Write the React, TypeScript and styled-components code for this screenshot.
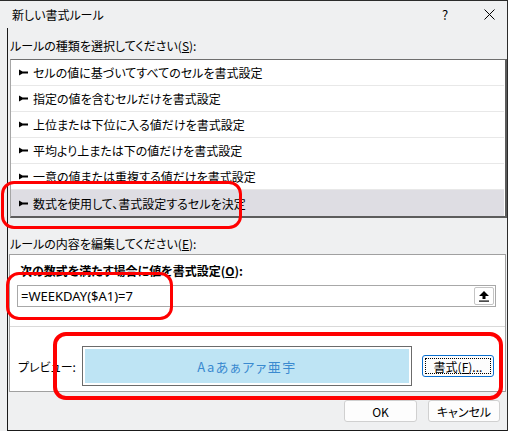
import React from "react";
import styled, { createGlobalStyle } from "styled-components";

const GlobalStyle = createGlobalStyle`
  html, body {
    margin: 0;
    padding: 0;
    background: #ffffff;
    overflow: hidden;
  }
  body {
    font-family: "Noto Sans CJK JP", "Noto Sans", sans-serif;
    font-feature-settings: "palt";
    font-size: 12px;
    color: #000;
  }
`;

const Dialog = styled.div`
  position: relative;
  width: 508px;
  height: 431px;
  box-sizing: border-box;
  border-top: 1px solid #2b2b2b;
  border-right: 1px solid #2b2b2b;
  background: #eff0f1;
  display: flex;
  flex-direction: column;
`;

const TitleBar = styled.div`
  height: 27px;
  display: flex;
  align-items: center;
  padding-left: 12px;
  font-size: 12px;
`;

const Title = styled.div`
  flex: 1;
`;

const TitleButton = styled.div<{ $w: number }>`
  width: ${(p) => p.$w}px;
  height: 27px;
  display: flex;
  align-items: center;
  justify-content: center;
  font-size: 13px;
`;

const Body = styled.div`
  flex: 1;
  margin-left: 7px;
  border-left: 1px solid #1a1a1a;
  border-bottom: 1px solid #1a1a1a;
  display: flex;
  flex-direction: column;
`;

const Label = styled.div<{ $top: number }>`
  margin-top: ${(p) => p.$top}px;
  padding-left: 2px;
  line-height: 16px;
  height: 16px;
`;

const ListBox = styled.div`
  margin: 5px 0 0 2px;
  width: 497px;
  box-sizing: border-box;
  background: #fff;
  border-top: 1px solid #6e6e6e;
  border-left: 1px solid #a6a6a6;
  border-right: 2px solid #5c5c5c;
  border-bottom: 2px solid #5c5c5c;
  padding-right: 1px;
`;

const Row = styled.div<{ $selected?: boolean }>`
  height: 26px;
  box-sizing: border-box;
  display: flex;
  align-items: center;
  gap: 5px;
  padding-left: 8px;
  background: ${(p) => (p.$selected ? "#dedde3" : "#ffffff")};
  border-bottom: ${(p) => (p.$selected ? "none" : "1px solid #e8e8e8")};
`;

const Panel = styled.div`
  margin: 2px 0 0 1px;
  width: 497px;
  box-sizing: border-box;
  background: #fff;
  border: 1px solid #a0a0a0;
  display: flex;
  flex-direction: column;
`;

const Heading = styled.div`
  margin: 8px 0 0 10px;
  line-height: 16px;
  font-weight: bold;
`;

const FormulaInput = styled.div`
  margin: 6px 0 0 7px;
  width: 479px;
  height: 22px;
  box-sizing: border-box;
  border: 1px solid #a8a8a8;
  display: flex;
  align-items: center;
  justify-content: space-between;
  padding: 0 1px 0 3px;
  font-family: "Noto Sans", sans-serif;
  font-size: 13px;
`;

const IconButton = styled.div`
  width: 20px;
  height: 18px;
  box-sizing: border-box;
  border: 1px solid #c4c4c4;
  border-radius: 2px;
  display: flex;
  align-items: center;
  justify-content: center;
`;

const Separator = styled.div`
  margin-top: 19px;
  height: 1px;
  background: #d9d9d9;
`;

const PreviewRow = styled.div`
  display: flex;
  align-items: center;
  padding: 19px 0 5px 8px;
`;

const PreviewLabel = styled.div`
  width: 64px;
`;

const PreviewBox = styled.div`
  width: 330px;
  height: 40px;
  box-sizing: border-box;
  border: 1px solid #6b6b6b;
  padding: 2px;
  background: #fff;
`;

const PreviewFill = styled.div`
  height: 100%;
  background: #bee4f4;
  color: #3a8ad0;
  font-size: 13px;
  letter-spacing: 1.5px;
  display: flex;
  align-items: center;
  justify-content: center;
`;

const Button = styled.div<{ $focus?: boolean; $w: number }>`
  width: ${(p) => p.$w}px;
  height: 22px;
  box-sizing: border-box;
  border: 1px solid ${(p) => (p.$focus ? "#0a6fd0" : "#d0d0d0")};
  border-radius: 3px;
  background: #fdfdfd;
  display: flex;
  align-items: stretch;
  padding: 2px;
`;

const ButtonText = styled.div<{ $focus?: boolean }>`
  flex: 1;
  display: flex;
  align-items: center;
  justify-content: center;
  border: 1px dotted ${(p) => (p.$focus ? "#000" : "transparent")};
`;

const FormatButtonWrap = styled.div`
  margin-left: 10px;
`;

const Footer = styled.div`
  margin-top: 8px;
  display: flex;
  justify-content: flex-end;
  gap: 11px;
  padding-right: 7px;
`;

const Annotation = styled.div<{ $x: number; $y: number; $w: number; $h: number; $b: number }>`
  position: absolute;
  left: ${(p) => p.$x}px;
  top: ${(p) => p.$y}px;
  width: ${(p) => p.$w}px;
  height: ${(p) => p.$h}px;
  box-sizing: border-box;
  border: ${(p) => p.$b}px solid #ff0000;
  border-radius: 13px;
  pointer-events: none;
`;

const Bullet = () => (
  <svg width="9" height="7" viewBox="0 0 9 7">
    <path d="M0 0.5 L3.5 2.6 L9 2.6 L9 4.4 L3.5 4.4 L0 6.5 Z" fill="#000" />
  </svg>
);

const CloseIcon = () => (
  <svg width="11" height="11" viewBox="0 0 11 11">
    <path d="M0.5 0.5 L10.5 10.5 M10.5 0.5 L0.5 10.5" stroke="#000" strokeWidth="1" />
  </svg>
);

const UploadIcon = () => (
  <svg width="10" height="11" viewBox="0 0 10 11">
    <path d="M5 0 L10 5 H6.5 V8 H3.5 V5 H0 Z" fill="#000" />
    <rect x="0" y="9.5" width="10" height="1.2" fill="#000" />
  </svg>
);

const rules = [
  "セルの値に基づいてすべてのセルを書式設定",
  "指定の値を含むセルだけを書式設定",
  "上位または下位に入る値だけを書式設定",
  "平均より上または下の値だけを書式設定",
  "一意の値または重複する値だけを書式設定",
  "数式を使用して、書式設定するセルを決定",
];

export default function App() {
  return (
    <>
      <GlobalStyle />
      <Dialog>
        <TitleBar>
          <Title>新しい書式ルール</Title>
          <TitleButton $w={24}>?</TitleButton>
          <TitleButton $w={20} />
          <TitleButton $w={24}>
            <CloseIcon />
          </TitleButton>
          <TitleButton $w={6} />
        </TitleBar>
        <Body>
          <Label $top={10}>
            ルールの種類を選択してください(<u>S</u>):
          </Label>
          <ListBox>
            {rules.map((r, i) => (
              <Row key={r} $selected={i === rules.length - 1}>
                <Bullet />
                <span>{r}</span>
              </Row>
            ))}
          </ListBox>
          <Label $top={18}>
            ルールの内容を編集してください(<u>E</u>):
          </Label>
          <Panel>
            <Heading>
              次の数式を満たす場合に値を書式設定(<u>O</u>):
            </Heading>
            <FormulaInput>
              <span>=WEEKDAY($A1)=7</span>
              <IconButton>
                <UploadIcon />
              </IconButton>
            </FormulaInput>
            <Separator />
            <PreviewRow>
              <PreviewLabel>プレビュー:</PreviewLabel>
              <PreviewBox>
                <PreviewFill>Aaあぁアァ亜宇</PreviewFill>
              </PreviewBox>
              <FormatButtonWrap>
                <Button $focus $w={72}>
                  <ButtonText $focus>
                    書式(<u>F</u>)...
                  </ButtonText>
                </Button>
              </FormatButtonWrap>
            </PreviewRow>
          </Panel>
          <Footer>
            <Button $w={73}>
              <ButtonText>OK</ButtonText>
            </Button>
            <Button $w={72}>
              <ButtonText>キャンセル</ButtonText>
            </Button>
          </Footer>
        </Body>
        <Annotation $x={1} $y={180} $w={241} $h={48} $b={3} />
        <Annotation $x={6} $y={271} $w={167} $h={48} $b={3} />
        <Annotation $x={53} $y={331} $w={450} $h={68} $b={4} />
      </Dialog>
    </>
  );
}
